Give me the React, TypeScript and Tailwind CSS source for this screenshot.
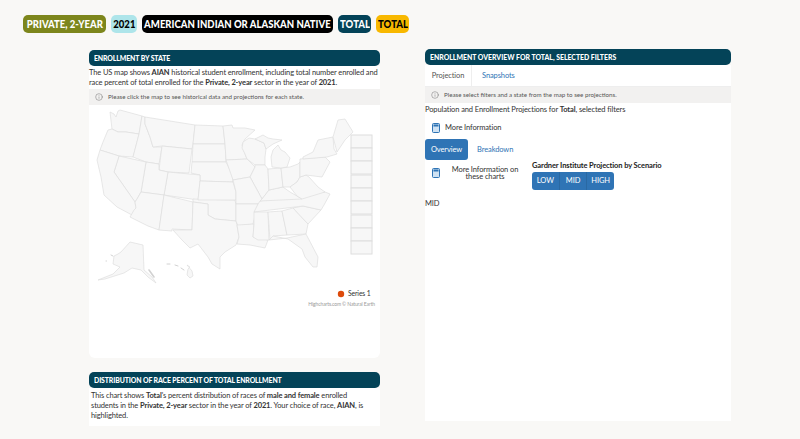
import { Info } from "lucide-react"

const font = "font-['Lato',sans-serif]"

// state outlines, in page pixels (the svg viewBox starts at 89,103)
const states: number[][][] = [
  [[110,110],[114,112],[116,115],[118,109],[120,108],[142,114],[139,132],[126,130],[118,130],[112,127]],
  [[112,127],[118,130],[126,130],[139,132],[137,140],[133,155],[119,154],[100,148],[103,140],[108,128]],
  [[142,114],[145,115],[145,122],[150,135],[153,145],[162,145],[159,162],[146,160],[133,155],[139,132]],
  [[145,115],[195,123],[193,142],[192,147],[162,144],[153,145],[150,135],[145,122]],
  [[162,144],[192,147],[189,171],[168,170],[159,168]],
  [[195,123],[223,124],[225,142],[193,142]],
  [[193,142],[225,142],[226,158],[226,160],[192,160]],
  [[192,160],[226,160],[232,172],[233,180],[200,179],[200,173],[191,171]],
  [[168,170],[200,173],[200,179],[198,198],[164,193]],
  [[146,160],[159,162],[159,168],[168,170],[164,193],[141,190]],
  [[119,154],[146,160],[141,190],[137,197],[135,200],[114,170]],
  [[100,148],[119,154],[114,170],[135,200],[136,206],[132,213],[117,205],[104,193],[101,175],[97,158]],
  [[141,190],[164,193],[159,228],[148,224],[130,215],[134,208],[136,206],[135,200],[137,197]],
  [[164,193],[193,200],[192,228],[172,227],[172,229],[159,228]],
  [[193,197],[235,198],[236,203],[236,219],[215,217],[208,213],[208,202],[193,200]],
  [[200,179],[233,180],[236,190],[236,198],[198,198]],
  [[193,200],[208,202],[208,213],[215,217],[236,219],[237,223],[239,235],[236,243],[225,250],[220,255],[220,267],[212,262],[208,255],[198,242],[190,246],[182,238],[173,228],[192,228]],
  [[223,124],[232,123],[233,126],[245,126],[255,128],[245,137],[242,143],[245,152],[247,157],[226,158],[225,142]],
  [[226,158],[247,157],[255,165],[250,175],[233,178]],
  [[243,140],[249,136],[255,137],[264,141],[266,147],[265,155],[265,163],[255,163],[247,157],[245,152],[242,146]],
  [[255,163],[265,163],[268,167],[269,188],[262,197],[250,175],[255,165]],
  [[233,178],[250,175],[262,197],[262,200],[258,202],[236,202],[236,190]],
  [[236,202],[258,202],[253,222],[238,224],[236,219]],
  [[237,223],[254,222],[253,235],[268,238],[265,246],[250,243],[237,242],[239,235]],
  [[254,210],[268,210],[269,238],[258,238],[253,235],[254,222]],
  [[268,210],[282,209],[287,233],[273,234],[270,238]],
  [[282,209],[293,206],[308,222],[306,232],[287,233]],
  [[293,206],[303,204],[321,208],[308,222]],
  [[258,202],[260,199],[325,190],[330,192],[324,203],[321,208],[303,204],[254,210]],
  [[262,197],[269,188],[283,185],[290,190],[297,194],[302,197],[260,199]],
  [[268,167],[281,166],[283,185],[269,188]],
  [[281,166],[290,165],[298,162],[300,160],[300,175],[297,180],[290,185],[283,185]],
  [[297,194],[290,185],[297,180],[300,175],[306,173],[309,175],[318,185],[325,190],[302,197]],
  [[272,165],[271,155],[273,148],[278,143],[281,148],[285,150],[290,156],[287,165],[281,166]],
  [[255,137],[263,133],[268,136],[273,137],[282,138],[273,142],[266,147],[264,141]],
  [[300,157],[325,155],[330,160],[322,175],[306,173],[300,175]],
  [[303,155],[313,150],[318,138],[333,135],[334,147],[337,152],[327,155],[303,157]],
  [[333,135],[338,118],[345,117],[353,130],[345,138],[337,150]],
  [[269,238],[287,236],[306,232],[318,255],[317,265],[313,265],[305,255],[302,247],[288,237],[273,234]],
]

const alaska = "M121 250L130 240L143 243L144 268L152 275L156 281L148 275L141 268L132 266L124 271L105 277L98 278L113 272L120 265L113 262L114 254L118 252Z"

function UsMap() {
  const pts = (s: number[][]) => s.map(([x, y]) => `${x},${y}`).join(" ")
  return (
    <svg width="291" height="253" viewBox="89 103 291 253" className="block">
      <g fill="#f7f7f7" stroke="#dedede" strokeWidth="0.7" strokeLinejoin="round">
        {states.map((s, i) => (
          <polygon key={i} points={pts(s)} />
        ))}
        <path d={alaska} />
        <path d="M187 263L190 265L188 267L187 273L190 276L193 274L192 269Z" />
      </g>
      <g fill="none" stroke="#d2d2d2" strokeWidth="1" strokeLinecap="round">
        <path d="M149 268l5 7" strokeWidth="1.6" />
        <path d="M167 262h3M175 263l3 1M181 266l3 2" />
        <path d="M111 253l2 1M106 259h.5" />
      </g>
      <g fill="#f7f7f7" stroke="#dedede" strokeWidth="1">
        {[133, 146, 159, 173, 186, 199, 213, 226, 239].map((y) => (
          <rect key={y} x="351" y={y} width="21" height="13" />
        ))}
      </g>
      <circle cx="341" cy="292" r="3.2" fill="#dd4a0a" />
      <text x="348" y="294" fontSize="6.8" fill="#333">Series 1</text>
      <text x="375" y="304" fontSize="5" textAnchor="end" fill="#999">Highcharts.com © Natural Earth</text>
    </svg>
  )
}

function Pill({ label, className }: { label: string; className: string }) {
  return (
    <span className={`h-[18px] flex items-center justify-center rounded-[5px] ${className}`}>
      <span className="shrink-0 whitespace-nowrap font-black text-[11.5px] leading-none scale-x-[.83]">{label}</span>
    </span>
  )
}

function SectionHeader({ title }: { title: string }) {
  return (
    <div className="h-[16px] flex items-center px-[5px] bg-[#044358] rounded-[5px] text-white">
      <span className="whitespace-nowrap origin-left font-black text-[8px] leading-none scale-x-[.86]">{title}</span>
    </div>
  )
}

function Notice({ children }: { children: string }) {
  return (
    <div className="h-[16px] flex items-center gap-[5px] pl-[6px] bg-[#f2f1f0] text-[#555] text-[6.2px] tracking-normal">
      <Info size={8} strokeWidth={1.2} />
      {children}
    </div>
  )
}

function BookIcon() {
  return (
    <svg width="8" height="10" viewBox="0 0 8 10" className="shrink-0">
      <rect x="0.5" y="0.5" width="7" height="9" rx="1" fill="#cfe2f3" stroke="#2f74b5" />
      <rect x="1.5" y="1.5" width="5" height="2" fill="#2f74b5" />
    </svg>
  )
}

export default function App() {
  return (
    <div className={`h-[439px] overflow-hidden bg-[#f9f8f6] text-[#333] ${font}`}>
      <div className="flex gap-[5px] pl-[23px] pt-[15px]">
        <Pill label="PRIVATE, 2-YEAR" className="w-[83px] bg-[#7d861c] text-white" />
        <Pill label="2021" className="w-[26px] bg-[#aee5ea] text-black" />
        <Pill label="AMERICAN INDIAN OR ALASKAN NATIVE" className="w-[191px] bg-black text-white" />
        <Pill label="TOTAL" className="w-[33px] bg-[#044358] text-white" />
        <Pill label="TOTAL" className="w-[33px] bg-[#f8b800] text-black" />
      </div>

      <div className="flex pl-[89px] pt-[17px]">
        <div className="w-[291px] text-[7.5px] tracking-[-0.12px]">
          <SectionHeader title="ENROLLMENT BY STATE" />
          <div className="bg-white rounded-b-[6px]">
            <p className="leading-[10px] pt-[2px] pb-[1px]">
              The US map shows <b>AIAN</b> historical student enrollment, including total number enrolled and race percent of total enrolled for the <b>Private, 2-year</b> sector in the year of <b>2021</b>.
            </p>
            <Notice>Please click the map to see historical data and projections for each state.</Notice>
            <UsMap />
          </div>
          <div className="mt-[14px]">
            <SectionHeader title="DISTRIBUTION OF RACE PERCENT OF TOTAL ENROLLMENT" />
          </div>
          <p className="bg-white leading-[10px] pl-[2px] pr-[16px] pt-[3px] pb-[5px]">
            This chart shows <b>Total</b>'s percent distribution of races of <b>male and female</b> enrolled students in the <b>Private, 2-year</b> sector in the year of <b>2021</b>. Your choice of race, <b>AIAN</b>, is highlighted.
          </p>
        </div>

        <div className="w-[306px] ml-[45px] -mt-px">
          <SectionHeader title="ENROLLMENT OVERVIEW FOR TOTAL, SELECTED FILTERS" />
          <div className="bg-white h-[356px] text-[7.5px] tracking-[-0.1px]">
            <div className="h-[22px] flex items-center border-b border-[#eeeeee]">
              <span className="w-[47px] h-full flex items-center justify-center border-r border-[#eeeeee] text-[#555]">Projection</span>
              <span className="ml-[10px] text-[#2f74b5]">Snapshots</span>
            </div>
            <Notice>Please select filters and a state from the map to see projections.</Notice>
            <p className="leading-[10px] pt-[2px]">
              Population and Enrollment Projections for <b>Total</b>, selected filters
            </p>
            <div className="flex items-center gap-[5px] pl-[7px] mt-[7px] h-[12px]">
              <BookIcon />
              More Information
            </div>
            <div className="flex items-center mt-[5px]">
              <span className="w-[43px] h-[21px] flex items-center justify-center bg-[#2f74b5] rounded-[3px] text-white">Overview</span>
              <span className="ml-[9px] text-[#2f74b5]">Breakdown</span>
            </div>
            <div className="flex">
              <div className="flex items-center w-[107px] pl-[7px] h-[20px] mt-[3px]">
                <BookIcon />
                <span className="ml-[9px] w-[72px] text-center leading-[7.5px]">More Information on these charts</span>
              </div>
              <div className="mt-[1px]">
                <div className="font-bold text-[#222] leading-[10px]">Gardner Institute Projection by Scenario</div>
                <div className="flex w-[82px] h-[18px] mt-[1px] bg-[#2f74b5] rounded-[3px] text-white">
                  <span className="flex-1 flex items-center justify-center border-r border-[#2a69a3]">LOW</span>
                  <span className="flex-1 flex items-center justify-center border-r border-[#2a69a3]">MID</span>
                  <span className="flex-1 flex items-center justify-center">HIGH</span>
                </div>
              </div>
            </div>
            <div className="mt-[9px] leading-[10px]">MID</div>
          </div>
        </div>
      </div>
    </div>
  )
}
